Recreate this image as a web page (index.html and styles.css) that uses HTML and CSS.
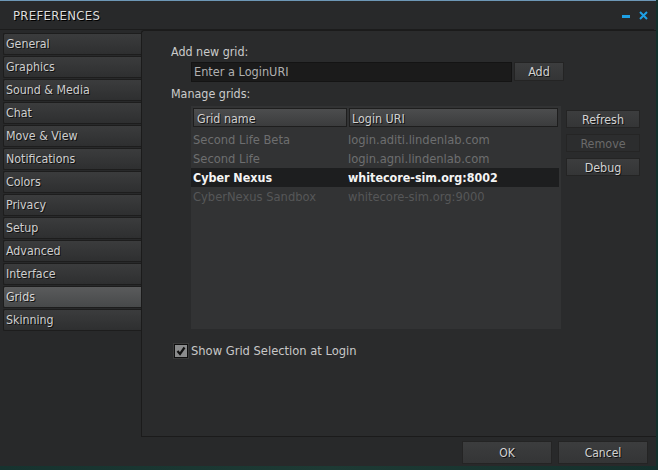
FILE: index.html
```html
<!DOCTYPE html>
<html>
<head>
<meta charset="utf-8">
<link rel="stylesheet" href="styles.css">
</head>
<body>
<div class="window">
  <div class="titlebar">
    <span class="title">PREFERENCES</span>
    <span class="controls">
      <span class="minimize"></span>
      <svg class="close" width="9" height="9" viewBox="0 0 9 9"><path d="M1 1L8 8M8 1L1 8" stroke="#1ea0e4" stroke-width="2"/></svg>
    </span>
  </div>
  <div class="main">
    <div class="tabs">
      <div class="tab">General</div>
      <div class="tab">Graphics</div>
      <div class="tab">Sound &amp; Media</div>
      <div class="tab">Chat</div>
      <div class="tab">Move &amp; View</div>
      <div class="tab">Notifications</div>
      <div class="tab">Colors</div>
      <div class="tab">Privacy</div>
      <div class="tab">Setup</div>
      <div class="tab">Advanced</div>
      <div class="tab">Interface</div>
      <div class="tab active">Grids</div>
      <div class="tab">Skinning</div>
    </div>
    <div class="panel">
      <div class="label">Add new grid:</div>
      <div class="addrow">
        <div class="input">Enter a LoginURI</div>
        <div class="btn add">Add</div>
      </div>
      <div class="label manage">Manage grids:</div>
      <div class="gridrow">
        <div class="list">
          <div class="header">
            <div class="hcell c1">Grid name</div>
            <div class="hcell c2">Login URI</div>
          </div>
          <div class="row"><span class="cell c1">Second Life Beta</span><span class="cell c2">login.aditi.lindenlab.com</span></div>
          <div class="row"><span class="cell c1">Second Life</span><span class="cell c2">login.agni.lindenlab.com</span></div>
          <div class="row selected"><span class="cell c1">Cyber Nexus</span><span class="cell c2">whitecore-sim.org:8002</span></div>
          <div class="row dim"><span class="cell c1">CyberNexus Sandbox</span><span class="cell c2">whitecore-sim.org:9000</span></div>
        </div>
        <div class="sidebtns">
          <div class="btn side">Refresh</div>
          <div class="btn side disabled">Remove</div>
          <div class="btn side">Debug</div>
        </div>
      </div>
      <div class="checkrow">
        <span class="checkbox">
          <svg width="10" height="10" viewBox="0 0 10 10"><path d="M1.5 5L4 8L8.5 1.5" stroke="#111" stroke-width="2.2" fill="none"/></svg>
        </span>
        <span class="checklabel">Show Grid Selection at Login</span>
      </div>
    </div>
  </div>
  <div class="footer">
    <div class="btn foot">OK</div>
    <div class="btn foot">Cancel</div>
  </div>
</div>
</body>
</html>
```
FILE: styles.css
```css
html, body {
  margin: 0;
  padding: 0;
}
body {
  width: 658px;
  height: 470px;
  background: linear-gradient(90deg, #16332f 0%, #1d3a34 50%, #14302c 100%);
  font-family: "DejaVu Sans Condensed", "DejaVu Sans", sans-serif;
  font-stretch: condensed;
  font-size: 12px;
  color: #c8c8c8;
  overflow: hidden;
}
.window {
  width: 656px;
  height: 465px;
  background: #28292a;
  border-top: 1px solid #6d97b6;
  display: flex;
  flex-direction: column;
}
.titlebar {
  height: 28px;
  border-bottom: 1px solid #1c1c1c;
  margin-right: 2px;
  display: flex;
  align-items: center;
  justify-content: space-between;
}
.title {
  padding-left: 13px;
  font-size: 13px;
  color: #dcdcdc;
  letter-spacing: 0.3px;
  text-shadow: 1px 1px 0 #000;
}
.controls {
  display: flex;
  align-items: center;
  gap: 9px;
  padding-right: 6px;
}
.minimize {
  width: 8px;
  height: 3px;
  background: #1ea0e4;
  margin-top: 3px;
}
.main {
  display: flex;
  height: 407px;
}
.tabs {
  width: 138px;
  padding-left: 3px;
  padding-top: 3px;
  display: flex;
  flex-direction: column;
  gap: 1px;
}
.tab {
  height: 20px;
  line-height: 20px;
  padding-left: 2px;
  border: 1px solid #1d1d1d;
  border-right: none;
  border-radius: 2px 0 0 2px;
  background: linear-gradient(#3b3c3d, #2e2f30);
  color: #cfcfcf;
  text-shadow: 1px 1px 0 #111;
  font-size: 12.3px;
}
.tab.active {
  background: linear-gradient(#5a5b5c, #47494a);
  color: #d6d6d6;
}
.panel {
  flex: 1;
  border: 1px solid #1b1b1b;
  border-right: none;
  border-radius: 3px 0 0 0;
  background: #2a2b2c;
  padding-left: 29px;
  padding-top: 13px;
  font-size: 12.4px;
}
.label {
  height: 15px;
  line-height: 15px;
  color: #cbcbcb;
}
.addrow {
  display: flex;
  margin-top: 3px;
  margin-left: 20px;
  gap: 2px;
}
.input {
  width: 317px;
  height: 18px;
  line-height: 18px;
  background: #1b1b1b;
  border: 1px solid #141414;
  padding-left: 2px;
  color: #b0b0b0;
  font-size: 12.6px;
}
.btn {
  display: flex;
  align-items: center;
  justify-content: center;
  background: linear-gradient(#3c3d3e, #343536);
  border: 1px solid #242424;
  color: #d2d2d2;
  text-shadow: 1px 1px 0 #111;
  box-sizing: border-box;
}
.btn.add {
  width: 50px;
  height: 19px;
}
.label.manage {
  margin-top: 4px;
}
.gridrow {
  display: flex;
  margin-top: 5px;
  margin-left: 20px;
}
.list {
  width: 370px;
  height: 223px;
  background: #323334;
}
.header {
  display: flex;
  padding: 2px 2px 0 2px;
  gap: 2px;
  height: 22px;
}
.hcell {
  height: 19px;
  line-height: 19px;
  box-sizing: border-box;
  padding-left: 3px;
  background: linear-gradient(#4c4d4e, #3b3c3d);
  border: 1px solid #1e1e1e;
  color: #d0d0d0;
  text-shadow: 1px 1px 0 #111;
}
.hcell.c1 { width: 154px; }
.hcell.c2 { width: 209px; padding-left: 2px; }
.row {
  display: flex;
  height: 19px;
  line-height: 19px;
  width: 368px;
  color: #6d6e6f;
  font-size: 12.8px;
}
.cell.c1 {
  width: 155px;
  padding-left: 2px;
}
.cell.c2 { padding-left: 0; }
.row.selected {
  background: #1d1e1f;
  color: #f4f4f4;
  font-weight: bold;
  font-size: 12.4px;
}
.row.dim { color: #565758; }
.sidebtns {
  display: flex;
  flex-direction: column;
  gap: 6px;
  margin-left: 5px;
  padding-top: 4px;
}
.btn.side {
  width: 74px;
  height: 18px;
}
.btn.disabled {
  background: #2c2d2e;
  border-color: #252525;
  color: #6a6a6a;
  text-shadow: none;
}
.checkrow {
  display: flex;
  align-items: center;
  margin-top: 14px;
  margin-left: 3px;
  gap: 3px;
  font-size: 12.8px;
}
.checkbox {
  width: 12px;
  height: 12px;
  background: #8a8b8c;
  border: 1px solid #0f0f0f;
  box-shadow: 0 0 0 1px #3a3a3a;
  display: flex;
  align-items: center;
  justify-content: center;
}
.checklabel {
  color: #c8c8c8;
}
.footer {
  display: flex;
  justify-content: flex-end;
  gap: 6px;
  padding-right: 8px;
  padding-top: 4px;
}
.btn.foot {
  width: 90px;
  height: 23px;
}
```
